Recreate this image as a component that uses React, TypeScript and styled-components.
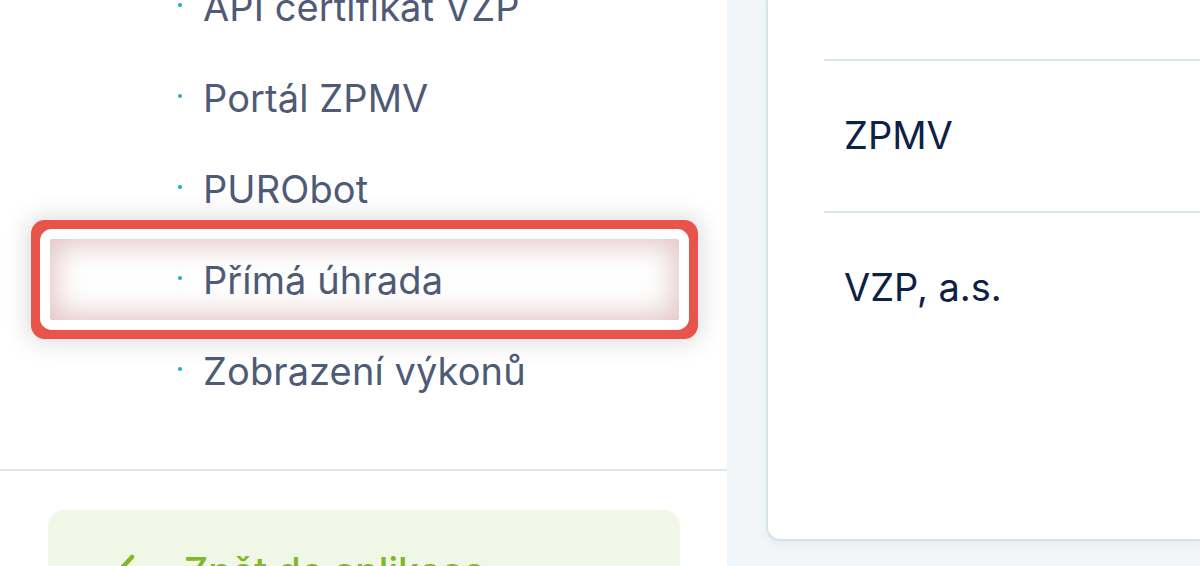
import React from "react";
import styled, { createGlobalStyle } from "styled-components";

const Global = createGlobalStyle`
  html, body { margin: 0; padding: 0; }
  body { font-family: Inter, "Noto Sans", sans-serif; background: #f3f6f8; }
  #root { height: 566px; overflow: hidden; }
`;

const Page = styled.div`
  display: flex;
  height: 566px;
  overflow: hidden;
`;

const Sidebar = styled.aside`
  width: 727px;
  flex-shrink: 0;
  background: #ffffff;
  display: flex;
  flex-direction: column;
`;

const Menu = styled.ul`
  list-style: none;
  margin: -37px 0 0 0;
  padding: 0 0 51px 0;
  border-bottom: 2px solid #e1e5e7;
`;

const Item = styled.li<{ $active?: boolean }>`
  position: relative;
  height: 91px;
  display: flex;
  align-items: center;
  padding-left: 178px;
  font-size: 38px;
  color: #4f5b76;
  letter-spacing: 0.1px;
  ${(p) =>
    p.$active &&
    `
    &::before {
      content: "";
      position: absolute;
      left: 50px;
      width: 629px;
      top: 3px;
      bottom: 7px;
      border-radius: 4px;
      box-shadow:
        inset 0 0 28px 6px rgba(200, 140, 140, 0.5),
        0 0 0 10px #ffffff,
        0 0 0 19px #e8534a,
        0 0 24px 22px rgba(0, 0, 0, 0.14);
      pointer-events: none;
    }
  `}
`;

const Dot = styled.span`
  width: 4px;
  height: 4px;
  border-radius: 50%;
  background: #1db3bd;
  margin-right: 21px;
  flex-shrink: 0;
  position: relative;
  top: -4px;
`;

const Label = styled.span`
  position: relative;
  top: -2px;
`;

const Footer = styled.div`
  padding: 39px 47px 0 48px;
`;

const BackButton = styled.button`
  width: 100%;
  border: none;
  background: #f0f7e6;
  border-radius: 16px;
  padding: 38px 0 30px 66px;
  display: flex;
  align-items: center;
  gap: 48px;
  font-family: Inter, "Noto Sans", sans-serif;
  font-size: 38px;
  font-weight: 500;
  color: #80b829;
  text-align: left;
  cursor: pointer;
`;

const Main = styled.main`
  flex: 1;
  background: #f3f6f8;
  padding: 0 0 25px 39px;
  display: flex;
  flex-direction: column;
`;

const Card = styled.section`
  flex: 1;
  background: #ffffff;
  border: 2px solid #d5e4e7;
  border-top: none;
  border-right: none;
  border-radius: 0 0 0 14px;
  box-shadow: 0 4px 10px rgba(40, 80, 100, 0.06);
  padding: 59px 0 0 56px;
  box-sizing: border-box;
`;

const Row = styled.div`
  height: 152px;
  border-top: 2px solid #d8e7eb;
  display: flex;
  align-items: center;
  padding-left: 20px;
  padding-bottom: 2px;
  font-size: 38px;
  color: #0e2046;
  box-sizing: border-box;
`;

const items = [
  "API certifikát VZP",
  "Portál ZPMV",
  "PURObot",
  "Přímá úhrada",
  "Zobrazení výkonů",
];

export default function App() {
  return (
    <>
      <Global />
      <Page>
        <Sidebar>
          <Menu>
            {items.map((t) => (
              <Item key={t} $active={t === "Přímá úhrada"}>
                <Dot />
                <Label>{t}</Label>
              </Item>
            ))}
          </Menu>
          <Footer>
            <BackButton>
              <svg width="22" height="34" viewBox="0 0 22 34" fill="none">
                <path
                  d="M18 3L5 17l13 14"
                  stroke="#80b829"
                  strokeWidth="4.5"
                  strokeLinecap="round"
                  strokeLinejoin="round"
                />
              </svg>
              Zpět do aplikace
            </BackButton>
          </Footer>
        </Sidebar>
        <Main>
          <Card>
            <Row>ZPMV</Row>
            <Row>VZP, a.s.</Row>
          </Card>
        </Main>
      </Page>
    </>
  );
}
